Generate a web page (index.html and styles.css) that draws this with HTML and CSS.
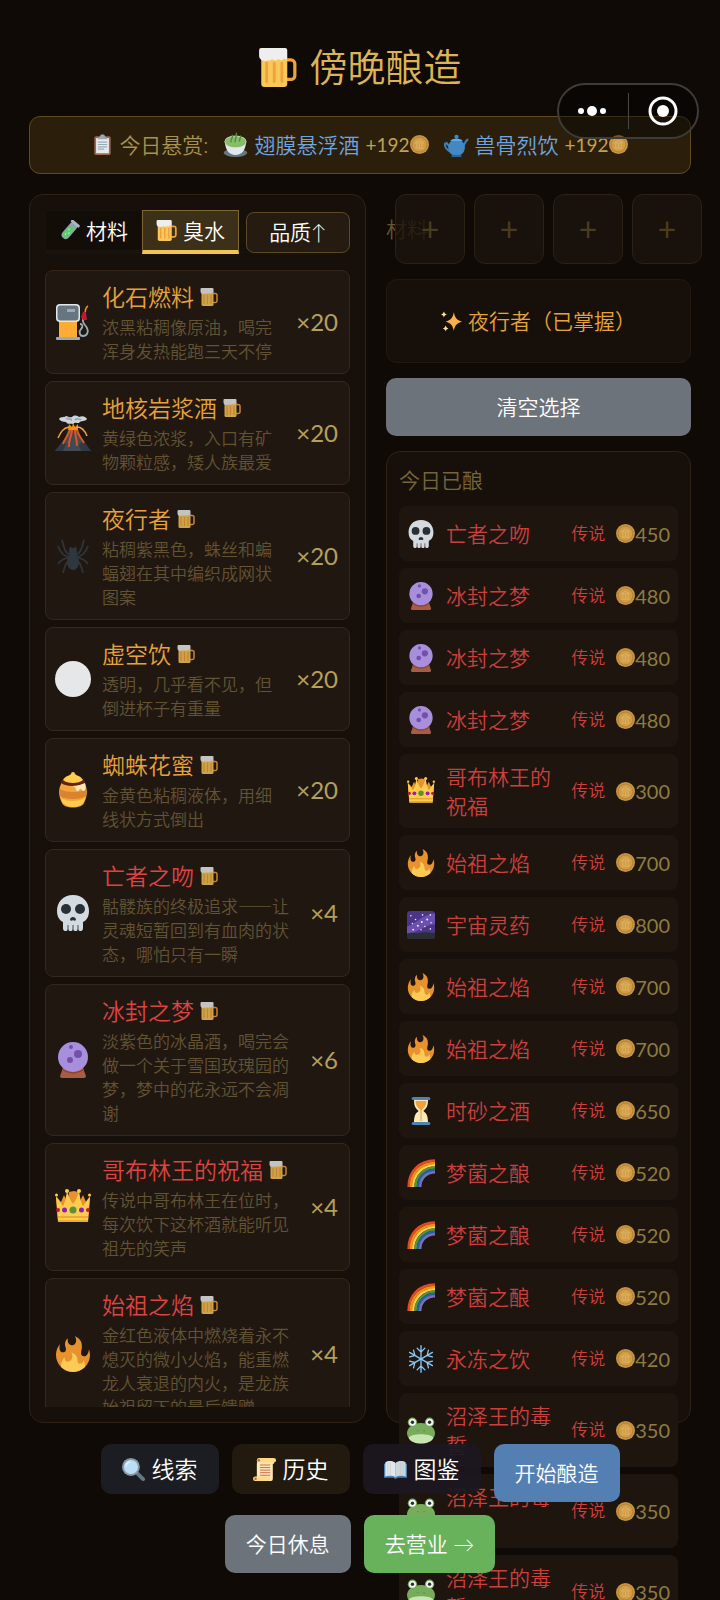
FILE: index.html
```html
<!DOCTYPE html>
<html lang="zh-CN">
<head>
  <meta charset="UTF-8" />
  <title>傍晚酿造</title>
  <meta name="viewport" content="width=device-width, initial-scale=1.0"/>
  <link rel="stylesheet" href="styles.css">
</head>
<body>

  <svg class="sprite" aria-hidden="true">
    <symbol id="i-beer" viewBox="0 0 36 36">
      <path d="M26 11h4.500a3.500 3.500 0 0 1 3.500 3.500v11a3.500 3.500 0 0 1-3.500 3.500H26" fill="none" stroke="#f0a03c" stroke-width="3"/>
      <path d="M3 9h24v24a3 3 0 0 1-3 3H6a3 3 0 0 1-3-3z" fill="#f9c857"/>
      <path d="M8 14v17M15 14v17M22 14v17" stroke="#f0a03c" stroke-width="2.500" stroke-linecap="round"/>
      <path d="M3 0h22a2 2 0 0 1 2 2v7c0 2-3 2-3 0-1 3-4 3-5 1-1 2-5 2-6 0-1 2-3 2-4 1-2 2-8 1-8-4V2a2 2 0 0 1 2-2z" fill="#eeeeee"/>
    </symbol>
    <symbol id="i-tube" viewBox="0 0 36 36">
      <g transform="rotate(40 18 18)">
        <rect x="11" y="1" width="14" height="34" rx="7" fill="#8fa3ad"/>
        <path d="M13 11h10v17a5 5 0 0 1-10 0z" fill="#5fc971"/>
        <rect x="9" y="0" width="18" height="5" rx="2" fill="#a9b8c0"/>
        <circle cx="16" cy="17" r="1.500" fill="#a6f0ae"/><circle cx="20" cy="22" r="1.500" fill="#a6f0ae"/><circle cx="17" cy="27" r="1.500" fill="#a6f0ae"/>
      </g>
    </symbol>
    <symbol id="i-fuel" viewBox="0 0 36 36">
      <path d="M25 20c3 0 3 3 1 5s-2 7 2 7 6-4 4-8-5-4-4-10" fill="none" stroke="#99aab5" stroke-width="1.800"/>
      <path d="M33 2c-2 1-3 4-3 9" fill="none" stroke="#f4900c" stroke-width="1.500"/>
      <path d="M28 8h3l1 8h-4l-2-3z" fill="#be1931"/>
      <path d="M4 17h18v17H4z" fill="#ffac33"/>
      <rect x="1" y="0" width="24" height="18" rx="4" fill="#e1e8ed"/>
      <rect x="2.500" y="1.500" width="21" height="15" rx="3" fill="#66757f"/>
      <path d="M12 5h8v3h-8z" fill="#99aab5"/>
      <rect x="1" y="33" width="24" height="3" rx="1" fill="#99aab5"/>
    </symbol>
    <symbol id="i-volcano" viewBox="0 0 36 36">
      <path d="M13 14h10c2 9 6 14 13 22H0c7-8 11-13 13-22z" fill="#414b56"/>
      <path d="M8 26l3 3-3 7H0zM28 25l-4 5 2 6h10z" fill="#303a44"/>
      <path d="M15 15c-2 7-5 8-7 14M17 15c0 6-4 10-3 17M20 15c0 6 2 9 2 16M22 15c1 5 5 9 7 13" fill="none" stroke="#dd551f" stroke-width="2"/>
      <path d="M14 9l3 3 1-4 2 4 3-3v6H13z" fill="#f4900c"/>
      <path d="M14 12C8 13 6 17 3 23M22 12c5 0 8 4 10 9" fill="none" stroke="#f4a43a" stroke-width="1.500"/>
      <path d="M4 4c2-3 5-1 7-3 2 0 3 2 6 1 3-3 6-1 7 0 4-2 7 0 8 2-2 3-6 1-8 4-3 0-4-1-6 1-3-1-5 1-7-2-3 0-6-1-7-3z" fill="#ccd6dd"/>
      <path d="M11 4c2-2 5 1 6 1M20 5c2-2 5-1 6 0" fill="none" stroke="#99aab5" stroke-width="2"/>
    </symbol>
    <symbol id="i-spider" viewBox="0 0 36 36">
      <path d="M16 17C10 16 9 9 7 2M16 19C9 19 5 14 3 8M16 20c-6-1-10 2-13 6M16 21c-6 3-6 8-8 14M20 17c6-1 7-8 9-15M20 19c7 0 11-5 13-11M20 20c6-1 10 2 13 6M20 21c6 3 6 8 8 14" fill="none" stroke="#2d353b" stroke-width="1.800"/>
      <ellipse cx="18" cy="24" rx="6" ry="8" fill="#2f373e"/><circle cx="18" cy="14" r="4" fill="#2f373e"/>
      <path d="M15 12l1-3M21 12l-1-3" stroke="#2f373e" stroke-width="2"/>
    </symbol>
    <symbol id="i-circle" viewBox="0 0 36 36"><circle cx="18" cy="18" r="18" fill="#e6e7e8"/></symbol>
    <symbol id="i-honey" viewBox="0 0 36 36">
      <path d="M8 9h20c5 6 5 14 1 22-2 6-20 6-22 0C3 23 3 15 8 9z" fill="#f4a43a"/>
      <path d="M5 17c5 4 21 4 26 0v7c-6 4-20 4-26 0z" fill="#d9822f"/>
      <path d="M6 26c6 4 18 4 24 0-2 12-22 12-24 0z" fill="#ffcc4d"/>
      <ellipse cx="18" cy="10" rx="12" ry="4" fill="#662113"/>
      <path d="M8 8c2-4 6-4 8-6a2 2 0 0 1 4 0c2 2 6 2 8 6-4 4-16 4-20 0z" fill="#ffcc4d"/>
      <path d="M17 14c6 0 10-2 13-3 1 3 1 7-1 8s-2-3-4-2-1 3-3 2 0-4-5-5z" fill="#ffe8b6"/>
    </symbol>
    <symbol id="i-skull" viewBox="0 0 36 36">
      <path d="M18 0C8 0 2 7 2 16c0 5 2 9 6 11v6c0 4 4 4 5 1 1 3 4 3 5 0 1 3 4 3 5 0 1 3 5 3 5-1v-6c4-2 6-6 6-11C34 7 28 0 18 0z" fill="#d3dae0"/>
      <circle cx="11" cy="14" r="5" fill="#292f33"/><circle cx="25" cy="14" r="5" fill="#292f33"/>
      <path d="M15 25c0-4 6-4 6 0-1 1-2 1-3 0-1 1-2 1-3 0z" fill="#292f33"/>
      <path d="M13 30v6M18 30v6M23 30v6" stroke="#4d4a48"/>
    </symbol>
    <symbol id="i-ball" viewBox="0 0 36 36">
      <path d="M8 26h20l3 8c0 1-1 2-2 2H7c-1 0-2-1-2-2z" fill="#a65d43"/>
      <circle cx="18" cy="15" r="15" fill="#a78fdd"/>
      <path d="M7 27c7 5 15 5 22 0" fill="none" stroke="#8a4633" stroke-width="1.500"/>
      <circle cx="23" cy="12" r="4" fill="#7450a8"/><circle cx="15" cy="18" r="3" fill="#7450a8"/><circle cx="16" cy="5" r="2" fill="#7450a8"/>
    </symbol>
    <symbol id="i-crown" viewBox="0 0 36 36">
      <path d="M3 31L1 7l5 6 3-7 4 8L14 3l5-1 4 1 1 11 4-8 3 7 4-6-2 24z" fill="#e8922e"/>
      <path d="M3 33L1 8c4 4 5 7 7 9 2-3 3-9 4-15 2 6 3 9 6 13 3-4 4-7 6-13 1 6 2 12 4 15 2-2 3-5 7-9l-2 25z" fill="#ffcc4d"/>
      <circle cx="1.500" cy="6" r="1.500" fill="#ffcc4d"/><circle cx="12" cy="2" r="2" fill="#ffcc4d"/><circle cx="24" cy="2" r="2" fill="#ffcc4d"/><circle cx="34.500" cy="6" r="1.500" fill="#ffcc4d"/>
      <path d="M3 28h30M3 32h30" stroke="#d98a24"/>
      <circle cx="18" cy="21" r="3.500" fill="#5c913b"/><circle cx="9.500" cy="21" r="2.500" fill="#9220ad"/><circle cx="26.500" cy="21" r="2.500" fill="#9220ad"/><circle cx="3" cy="21" r="2" fill="#be1931"/><circle cx="33" cy="21" r="2" fill="#be1931"/>
    </symbol>
    <symbol id="i-fire" viewBox="0 0 36 36">
      <path d="M35 19c0-2.062-.367-4.039-1.040-5.868-.46 5.389-3.333 8.157-6.335 6.868-2.812-1.208-.917-5.917-.777-8.164.236-3.809-.012-8.169-6.931-11.794 2.875 5.500.333 8.917-2.333 9.125-2.958.231-5.667-2.542-4.667-7.042-3.238 2.386-3.332 6.402-2.333 9 1.042 2.708-.042 4.958-2.583 5.208-2.840.28-4.418-3.041-2.963-8.333C2.520 10.965 1 14.805 1 19c0 9.389 7.611 17 17 17s17-7.611 17-17z" fill="#e8922e"/>
      <path d="M28.394 23.999c.148 3.084-2.561 4.293-4.019 3.709-2.106-.843-1.541-2.291-2.083-5.291s-2.625-5.083-5.708-6c2.250 6.333-1.247 8.667-3.080 9.084-1.872.426-3.753-.001-3.968-4.007C7.352 23.668 6 26.676 6 30c0 .368.023.73.055 1.090C9.125 34.124 13.342 36 18 36s8.875-1.876 11.945-4.910c.032-.36.055-.722.055-1.090 0-2.187-.584-4.236-1.606-6.001z" fill="#fccb55"/>
    </symbol>
    <symbol id="i-galaxy" viewBox="0 0 36 36">
      <rect width="36" height="36" rx="4" fill="#4a3684"/>
      <path d="M0 20C10 18 20 4 36 3v14c-14 1-20 10-36 13z" fill="#6c4fae"/>
      <path d="M0 29c8-3 12 1 18-1s12 1 18 0v4a4 4 0 0 1-4 4H4a4 4 0 0 1-4-4z" fill="#292f33"/>
      <g fill="#f0e8ff"><circle cx="5" cy="6" r="1"/><circle cx="11" cy="11" r="1"/><circle cx="20" cy="5" r="1"/><circle cx="30" cy="5" r="1"/><circle cx="26" cy="11" r="1.300"/><circle cx="19" cy="14" r="1.300"/><circle cx="14" cy="19" r="1.300"/><circle cx="7" cy="16" r="1"/><circle cx="31" cy="15" r="1"/><circle cx="23" cy="20" r="1"/><circle cx="8" cy="24" r="1.200"/><circle cx="30" cy="23" r="1"/><circle cx="18" cy="24" r="1"/></g>
    </symbol>
    <symbol id="i-hourglass" viewBox="0 0 36 36">
      <path d="M9 3h18c0 9-2 12-6 15 4 3 6 6 6 15H9c0-9 2-12 6-15-4-3-6-6-6-15z" fill="#ffe8b6"/>
      <path d="M11 5h14c0 6-3 9-7 12-4-3-7-6-7-12z" fill="#f0a03c"/>
      <path d="M18 16v15" stroke="#c8863c"/>
      <rect x="6" y="0" width="24" height="4" rx="2" fill="#4b84b8"/><rect x="6" y="32" width="24" height="4" rx="2" fill="#4b84b8"/>
    </symbol>
    <symbol id="i-rainbow" viewBox="0 0 36 36">
      <g fill="none" stroke-width="3.200">
        <path d="M2 36C2 16 16 2 36 2" stroke="#dd4a30"/>
        <path d="M5 36C5 18 18 5 36 5" stroke="#f4900c"/>
        <path d="M8 36C8 20 20 8 36 8" stroke="#ffcc4d"/>
        <path d="M11 36c0-14 11-25 25-25" stroke="#5c913b"/>
        <path d="M14 36c0-12 10-22 22-22" stroke="#226699"/>
        <path d="M17 36c0-11 8-19 19-19" stroke="#7f6bc0"/>
      </g>
    </symbol>
    <symbol id="i-snow" viewBox="0 0 36 36">
      <g fill="none" stroke="#88c9f9" stroke-width="1.700" stroke-linecap="round">
        <path d="M18 1v34M13 4l5 5 5-5M13 32l5-5 5 5"/>
        <path d="M18 1v34M13 4l5 5 5-5M13 32l5-5 5 5" transform="rotate(60 18 18)"/>
        <path d="M18 1v34M13 4l5 5 5-5M13 32l5-5 5 5" transform="rotate(120 18 18)"/>
      </g>
    </symbol>
    <symbol id="i-frog" viewBox="0 0 36 36">
      <ellipse cx="18" cy="22" rx="18" ry="13" fill="#77ad5a"/>
      <circle cx="7" cy="8" r="6" fill="#77ad5a"/><circle cx="29" cy="8" r="6" fill="#77ad5a"/>
      <circle cx="7" cy="8" r="4.500" fill="#f5f8fa"/><circle cx="29" cy="8" r="4.500" fill="#f5f8fa"/>
      <circle cx="7" cy="8" r="2.200" fill="#292f33"/><circle cx="29" cy="8" r="2.200" fill="#292f33"/>
      <path d="M2 28c4-6 28-6 32 0-3 10-29 10-32 0z" fill="#c6e5b3"/>
      <circle cx="14" cy="19" r="1" fill="#5c913b"/><circle cx="22" cy="19" r="1" fill="#5c913b"/>
    </symbol>
    <symbol id="i-clipboard" viewBox="0 0 36 36">
      <rect x="4" y="4" width="28" height="32" rx="3" fill="#a06750"/>
      <path d="M7 7h22v26H7z" fill="#e6eaed"/>
      <path d="M10 14h16M10 18h16M10 22h16M10 26h11" stroke="#99aab5" stroke-width="2"/>
      <path d="M10 9c0-4 4-3 4-6s8-3 8 0 4 2 4 6z" fill="#99aab5"/>
    </symbol>
    <symbol id="i-tea" viewBox="0 0 36 36">
      <ellipse cx="18" cy="30" rx="17" ry="6" fill="#66757f"/>
      <path d="M3 14h30c0 12-6 19-15 19S3 26 3 14z" fill="#e1e8ed"/>
      <ellipse cx="18" cy="14" rx="16" ry="9" fill="#d5e0e5"/><ellipse cx="18" cy="14" rx="15" ry="8" fill="#86bd66"/>
      <path d="M12 15c-3-4 4-6 1-11M18 15c-3-5 4-7 1-14M24 14c-2-3 3-5 1-9" fill="none" stroke="#4f8f3b" stroke-width="2"/>
    </symbol>
    <symbol id="i-teapot" viewBox="0 0 36 36">
      <path d="M9 28C4 26 1 21 1 17l3-1c2 4 4 5 6 5M27 20c4-1 3-9 8-9" fill="none" stroke="#3b7fba" stroke-width="3"/>
      <path d="M18 11c8 0 12 5 12 11 0 7-4 12-12 12S6 29 6 22c0-6 4-11 12-11z" fill="#4289c1"/>
      <path d="M9 13c2-5 16-5 18 0z" fill="#55acee"/><circle cx="18" cy="7" r="3" fill="#4289c1"/><path d="M11 33h14v3H11z" fill="#2a6797"/>
    </symbol>
    <symbol id="i-coin" viewBox="0 0 36 36">
      <circle cx="18" cy="18" r="18" fill="#c8943f"/><circle cx="18" cy="18" r="14" fill="#cf9c48" stroke="#b07c30" stroke-width="1.500"/>
      <path d="M10 15l8-5 8 5zM10 25h16M13 16v8M18 16v8M23 16v8" fill="none" stroke="#e3b768" stroke-width="1.500"/>
    </symbol>
    <symbol id="i-sparkles" viewBox="0 0 36 36">
      <path d="M22 2c2 10 5 13 14 16-9 3-12 6-14 16-2-10-5-13-14-16 9-3 12-6 14-16z" fill="#fbb04a"/>
      <path d="M5 1c1 3 2 4 5 5-3 1-4 2-5 5-1-3-2-4-5-5 3-1 4-2 5-5zM8 25c1 3 2 4 5 5-3 1-4 2-5 5-1-3-2-4-5-5 3-1 4-2 5-5z" fill="#ffe08a"/>
    </symbol>
    <symbol id="i-search" viewBox="0 0 36 36">
      <path d="M22 22l11 11" stroke="#66757f" stroke-width="6" stroke-linecap="round"/>
      <circle cx="14" cy="14" r="14" fill="#8899a6"/><circle cx="14" cy="14" r="11" fill="#bbddf5"/>
      <path d="M6 13a8 8 0 0 1 7-7" fill="none" stroke="#e8f5ff" stroke-width="2"/>
    </symbol>
    <symbol id="i-scroll" viewBox="0 0 36 36">
      <path d="M7 3h26v6h-2v24a3 3 0 0 1-3 3H6V9z" fill="#ffe8b6"/>
      <rect x="6" y="0" width="30" height="7" rx="3.500" fill="#ffd983"/><rect x="0" y="29" width="27" height="7" rx="3.500" fill="#ffd983"/>
      <circle cx="9" cy="3.500" r="2" fill="#c1694f"/><circle cx="4" cy="32.500" r="2" fill="#c1694f"/>
      <path d="M11 11h16M11 15h16M11 19h16M11 23h16M11 27h16" stroke="#c1694f" stroke-width="1.500"/>
    </symbol>
    <symbol id="i-book" viewBox="0 0 36 36">
      <path d="M0 9h36v22H21c-1 2-5 2-6 0H0z" fill="#4a7fae"/>
      <path d="M2 7C6 4 14 4 18 8v22c-4-3-12-3-16-1z" fill="#e1e8ed"/><path d="M34 7c-4-3-12-3-16 1v22c4-3 12-3 16-1z" fill="#ccd6dd"/>
      <path d="M18 8v22M6 6v22M10 5v22M26 5v22M30 6v22" stroke="#bcc8d0"/>
    </symbol>
  </svg>

  <div class="capsule">
    <button aria-label="更多">
      <svg width="34" height="12" viewBox="0 0 34 12" fill="#fff"><circle cx="5" cy="6" r="3"/><circle cx="16" cy="6" r="5"/><circle cx="27" cy="6" r="3"/></svg>
    </button>
    <span class="capsule-line"></span>
    <button aria-label="关闭">
      <svg width="32" height="32" viewBox="0 0 32 32"><circle cx="16" cy="16" r="13" fill="none" stroke="#fff" stroke-width="3"/><circle cx="16" cy="16" r="6" fill="#fff"/></svg>
    </button>
  </div>

  <h1><svg class="icon"><use href="#i-beer"/></svg>傍晚酿造</h1>

  <div class="bounty">
    <span class="bounty-label"><svg class="icon"><use href="#i-clipboard"/></svg>今日悬赏:</span>
    <span class="bounty-item"><svg class="icon"><use href="#i-tea"/></svg><span class="drink">翅膜悬浮酒</span><span class="bonus">+192<svg class="coin"><use href="#i-coin"/></svg></span></span>
    <span class="bounty-item"><svg class="icon"><use href="#i-teapot"/></svg><span class="drink">兽骨烈饮</span><span class="bonus">+192<svg class="coin"><use href="#i-coin"/></svg></span></span>
  </div>

  <main>
    <section class="panel stock">
      <div class="toolbar">
        <button class="tab"><svg class="icon"><use href="#i-tube"/></svg>材料</button>
        <button class="tab active"><svg class="icon"><use href="#i-beer"/></svg>臭水</button>
        <button class="sort">品质↑</button>
      </div>
      <ul class="stock-list" id="stock"></ul>
    </section>

    <section class="brew">
      <div class="slots">
        <span class="slots-label">材料</span>
        <button class="slot">+</button>
        <button class="slot">+</button>
        <button class="slot">+</button>
        <button class="slot">+</button>
      </div>
      <div class="result"><svg class="icon"><use href="#i-sparkles"/></svg>夜行者（已掌握）</div>
      <button class="btn grey">清空选择</button>
      <div class="panel brewed">
        <h2>今日已酿</h2>
        <ul id="brewed"></ul>
      </div>
    </section>
  </main>

  <footer>
    <button class="link clue"><svg class="icon"><use href="#i-search"/></svg>线索</button>
    <button class="link history"><svg class="icon"><use href="#i-scroll"/></svg>历史</button>
    <button class="link guide"><svg class="icon"><use href="#i-book"/></svg>图鉴</button>
    <button class="btn blue">开始酿造</button>
    <button class="btn grey">今日休息</button>
    <button class="btn green">去营业 →</button>
  </footer>

  <script>
    // icon, name, rarity, description, count
    const stock = [
      ['fuel', '化石燃料', 'epic', '浓黑粘稠像原油，喝完浑身发热能跑三天不停', 20],
      ['volcano', '地核岩浆酒', 'epic', '黄绿色浓浆，入口有矿物颗粒感，矮人族最爱', 20],
      ['spider', '夜行者', 'epic', '粘稠紫黑色，蛛丝和蝙蝠翅在其中编织成网状图案', 20],
      ['circle', '虚空饮', 'epic', '透明，几乎看不见，但倒进杯子有重量', 20],
      ['honey', '蜘蛛花蜜', 'epic', '金黄色粘稠液体，用细线状方式倒出', 20],
      ['skull', '亡者之吻', 'legend', '骷髅族的终极追求——让灵魂短暂回到有血肉的状态，哪怕只有一瞬', 4],
      ['ball', '冰封之梦', 'legend', '淡紫色的冰晶酒，喝完会做一个关于雪国玫瑰园的梦，梦中的花永远不会凋谢', 6],
      ['crown', '哥布林王的祝福', 'legend', '传说中哥布林王在位时，每次饮下这杯酒就能听见祖先的笑声', 4],
      ['fire', '始祖之焰', 'legend', '金红色液体中燃烧着永不熄灭的微小火焰，能重燃龙人衰退的内火，是龙族始祖留下的最后馈赠', 4]
    ];

    // icon, name, price
    const brewed = [
      ['skull', '亡者之吻', 450],
      ['ball', '冰封之梦', 480],
      ['ball', '冰封之梦', 480],
      ['ball', '冰封之梦', 480],
      ['crown', '哥布林王的祝福', 300],
      ['fire', '始祖之焰', 700],
      ['galaxy', '宇宙灵药', 800],
      ['fire', '始祖之焰', 700],
      ['fire', '始祖之焰', 700],
      ['hourglass', '时砂之酒', 650],
      ['rainbow', '梦菌之酿', 520],
      ['rainbow', '梦菌之酿', 520],
      ['rainbow', '梦菌之酿', 520],
      ['snow', '永冻之饮', 420],
      ['frog', '沼泽王的毒誓', 350],
      ['frog', '沼泽王的毒誓', 350],
      ['frog', '沼泽王的毒誓', 350]
    ];

    document.getElementById('stock').innerHTML = stock.map(([icon, name, rarity, desc, count]) => `
      <li class="card">
        <svg class="icon"><use href="#i-${icon}"/></svg>
        <div class="card-body">
          <div class="card-name ${rarity}">${name}<svg class="mug"><use href="#i-beer"/></svg></div>
          <p>${desc}</p>
        </div>
        <span class="count">×${count}</span>
      </li>`).join('');

    document.getElementById('brewed').innerHTML = brewed.map(([icon, name, price]) => `
      <li class="row">
        <svg class="icon"><use href="#i-${icon}"/></svg>
        <span class="row-name">${name}</span>
        <span class="rarity">传说</span>
        <span class="price"><svg class="coin"><use href="#i-coin"/></svg>${price}</span>
      </li>`).join('');
  </script>
</body>
</html>
```

FILE: styles.css
```css
* {
  box-sizing: border-box;
  margin: 0;
  padding: 0;
}

body {
  display: flex;
  flex-direction: column;
  height: 100vh;
  padding: 38px 29px 27px;
  overflow: hidden;
  position: relative;
  background: #0f0a06;
  color: #a8934f;
  font-family: Lato, 'Noto Sans CJK SC', sans-serif;
  font-size: 21px;
  font-weight: 350;
  line-height: 1.4;
}

button {
  font: inherit;
  color: #fff;
  border: none;
  cursor: pointer;
}

ul {
  list-style: none;
}

.sprite {
  position: absolute;
  width: 0;
  height: 0;
}

.icon {
  flex: none;
  width: 21px;
  height: 21px;
}

.coin {
  flex: none;
  width: 19px;
  height: 19px;
}

.capsule {
  position: absolute;
  z-index: 3;
  top: 83px;
  right: 21px;
  display: flex;
  align-items: center;
  width: 142px;
  height: 56px;
  border: 2px solid #3f3b36;
  border-radius: 28px;
  background: rgba(0, 0, 0, 0.4);
}

.capsule button {
  flex: 1;
  display: flex;
  justify-content: center;
  background: none;
}

.capsule-line {
  width: 1px;
  height: 36px;
  background: #4a4642;
}

h1 {
  display: flex;
  align-items: center;
  justify-content: center;
  gap: 12px;
  height: 58px;
  margin-bottom: 20px;
  color: #dcb457;
  font-size: 38px;
  font-weight: 350;
}

h1 .icon {
  width: 39px;
  height: 39px;
}

.bounty {
  display: flex;
  align-items: center;
  justify-content: center;
  gap: 15px;
  height: 58px;
  margin-bottom: 20px;
  border: 1px solid #5e4b1f;
  border-radius: 11px;
  background: #2b1f0c;
}

.bounty-label,
.bounty-item {
  display: flex;
  align-items: center;
  gap: 6px;
  white-space: nowrap;
}

.bounty-item .icon {
  width: 25px;
  height: 25px;
}

.drink {
  color: #6fa5e0;
}

.bonus {
  display: flex;
  align-items: center;
  color: #c3a24a;
  font-size: 19px;
  font-weight: 400;
}

main {
  flex: 1;
  min-height: 0;
  display: grid;
  grid-template-columns: 337fr 305fr;
  grid-template-rows: minmax(0, 1fr);
  gap: 20px;
  margin-bottom: 21px;
}

.panel {
  border: 1px solid #2f2114;
  border-radius: 14px;
  background: #17100a;
}

.stock {
  display: flex;
  flex-direction: column;
  padding: 15px;
}

.toolbar {
  display: flex;
  align-items: center;
  margin-bottom: 16px;
}

.tab {
  display: flex;
  align-items: center;
  gap: 6px;
  height: 44px;
  padding: 0 13px;
  border: 1px solid #17110c;
  border-bottom: 4px solid #1a130d;
  background: #130d08;
}

.tab.active {
  border-color: #7d6630;
  border-bottom-color: #f1c457;
  background: #3c3019;
}

.sort {
  flex: 1;
  height: 41px;
  margin-left: 7px;
  border: 1px solid #5b4a25;
  border-radius: 8px;
  background: #251b10;
}

.stock-list {
  flex: 1;
  min-height: 0;
  overflow: hidden;
}

.card {
  display: flex;
  align-items: center;
  gap: 11px;
  margin-bottom: 7px;
  padding: 10px 11px 10px 9px;
  border: 1px solid #35271b;
  border-radius: 8px;
  background: #211711;
}

.card .icon {
  width: 36px;
  height: 36px;
}

.card-body {
  flex: 1;
}

.card-name {
  display: flex;
  align-items: center;
  gap: 6px;
  height: 32px;
  margin-bottom: 2px;
  font-size: 23px;
}

.mug {
  width: 18px;
  height: 18px;
  opacity: 0.8;
}

.epic {
  color: #e8a23c;
}

.legend {
  color: #dd4340;
}

.card p {
  color: #625333;
  font-family: 'Noto Sans CJK SC', sans-serif;
  font-size: 17px;
  line-height: 24px;
}

.count {
  color: #b5a059;
  font-size: 24px;
  font-weight: 400;
}

.brew {
  display: flex;
  flex-direction: column;
  gap: 15px;
  min-width: 0;
}

.slots {
  display: flex;
  align-items: center;
  gap: 9px;
}

/* the label is squeezed by the four slots and runs under the first one */
.slots-label {
  flex: 1 1 0;
  min-width: 0;
  white-space: nowrap;
  color: #66552f;
}

.slot {
  position: relative;
  flex: none;
  width: 70px;
  height: 70px;
  border: 1px solid #2b2016;
  border-radius: 11px;
  background: rgba(27, 19, 13, 0.8);
  color: #4a3c1f;
  font-size: 32px;
  font-weight: 400;
}

.result {
  display: flex;
  align-items: center;
  justify-content: center;
  gap: 6px;
  height: 84px;
  border: 1px solid #221812;
  border-radius: 11px;
  background: #17100a;
  color: #e8a23c;
}

.btn {
  height: 58px;
  padding: 0 21px;
  border-radius: 10px;
}

.grey {
  background: #6d737b;
}

.blue {
  background: #547fb2;
}

.green {
  background: #69b25c;
}

.brewed {
  flex: 1;
  min-height: 0;
  padding: 12px;
}

h2 {
  margin-bottom: 10px;
  color: #756538;
  font-size: 21px;
  font-weight: 350;
  line-height: 32px;
}

.row {
  display: flex;
  align-items: center;
  gap: 11px;
  min-height: 55px;
  margin-bottom: 7px;
  padding: 8px;
  border-radius: 8px;
  background: #1e150f;
}

.row .icon {
  width: 28px;
  height: 28px;
}

.row-name {
  flex: 1;
  color: #cc3f3b;
  line-height: 29px;
}

.rarity {
  color: #cc3f3b;
  font-size: 17px;
}

.price {
  display: flex;
  align-items: center;
  color: #8d7c40;
  font-size: 20px;
  font-weight: 400;
}

footer {
  position: relative;
  z-index: 2;
  display: flex;
  flex-wrap: wrap;
  align-items: flex-start;
  justify-content: center;
  gap: 13px;
  padding: 0 48px;
}

.link {
  display: flex;
  align-items: center;
  gap: 7px;
  height: 50px;
  padding: 0 21px;
  border-radius: 10px;
  font-size: 23px;
}

.link .icon {
  width: 23px;
  height: 23px;
}

.clue {
  background: #1c1d22;
}

.history {
  background: #221a0f;
}

.guide {
  background: rgba(28, 23, 31, 0.92);
}
```
